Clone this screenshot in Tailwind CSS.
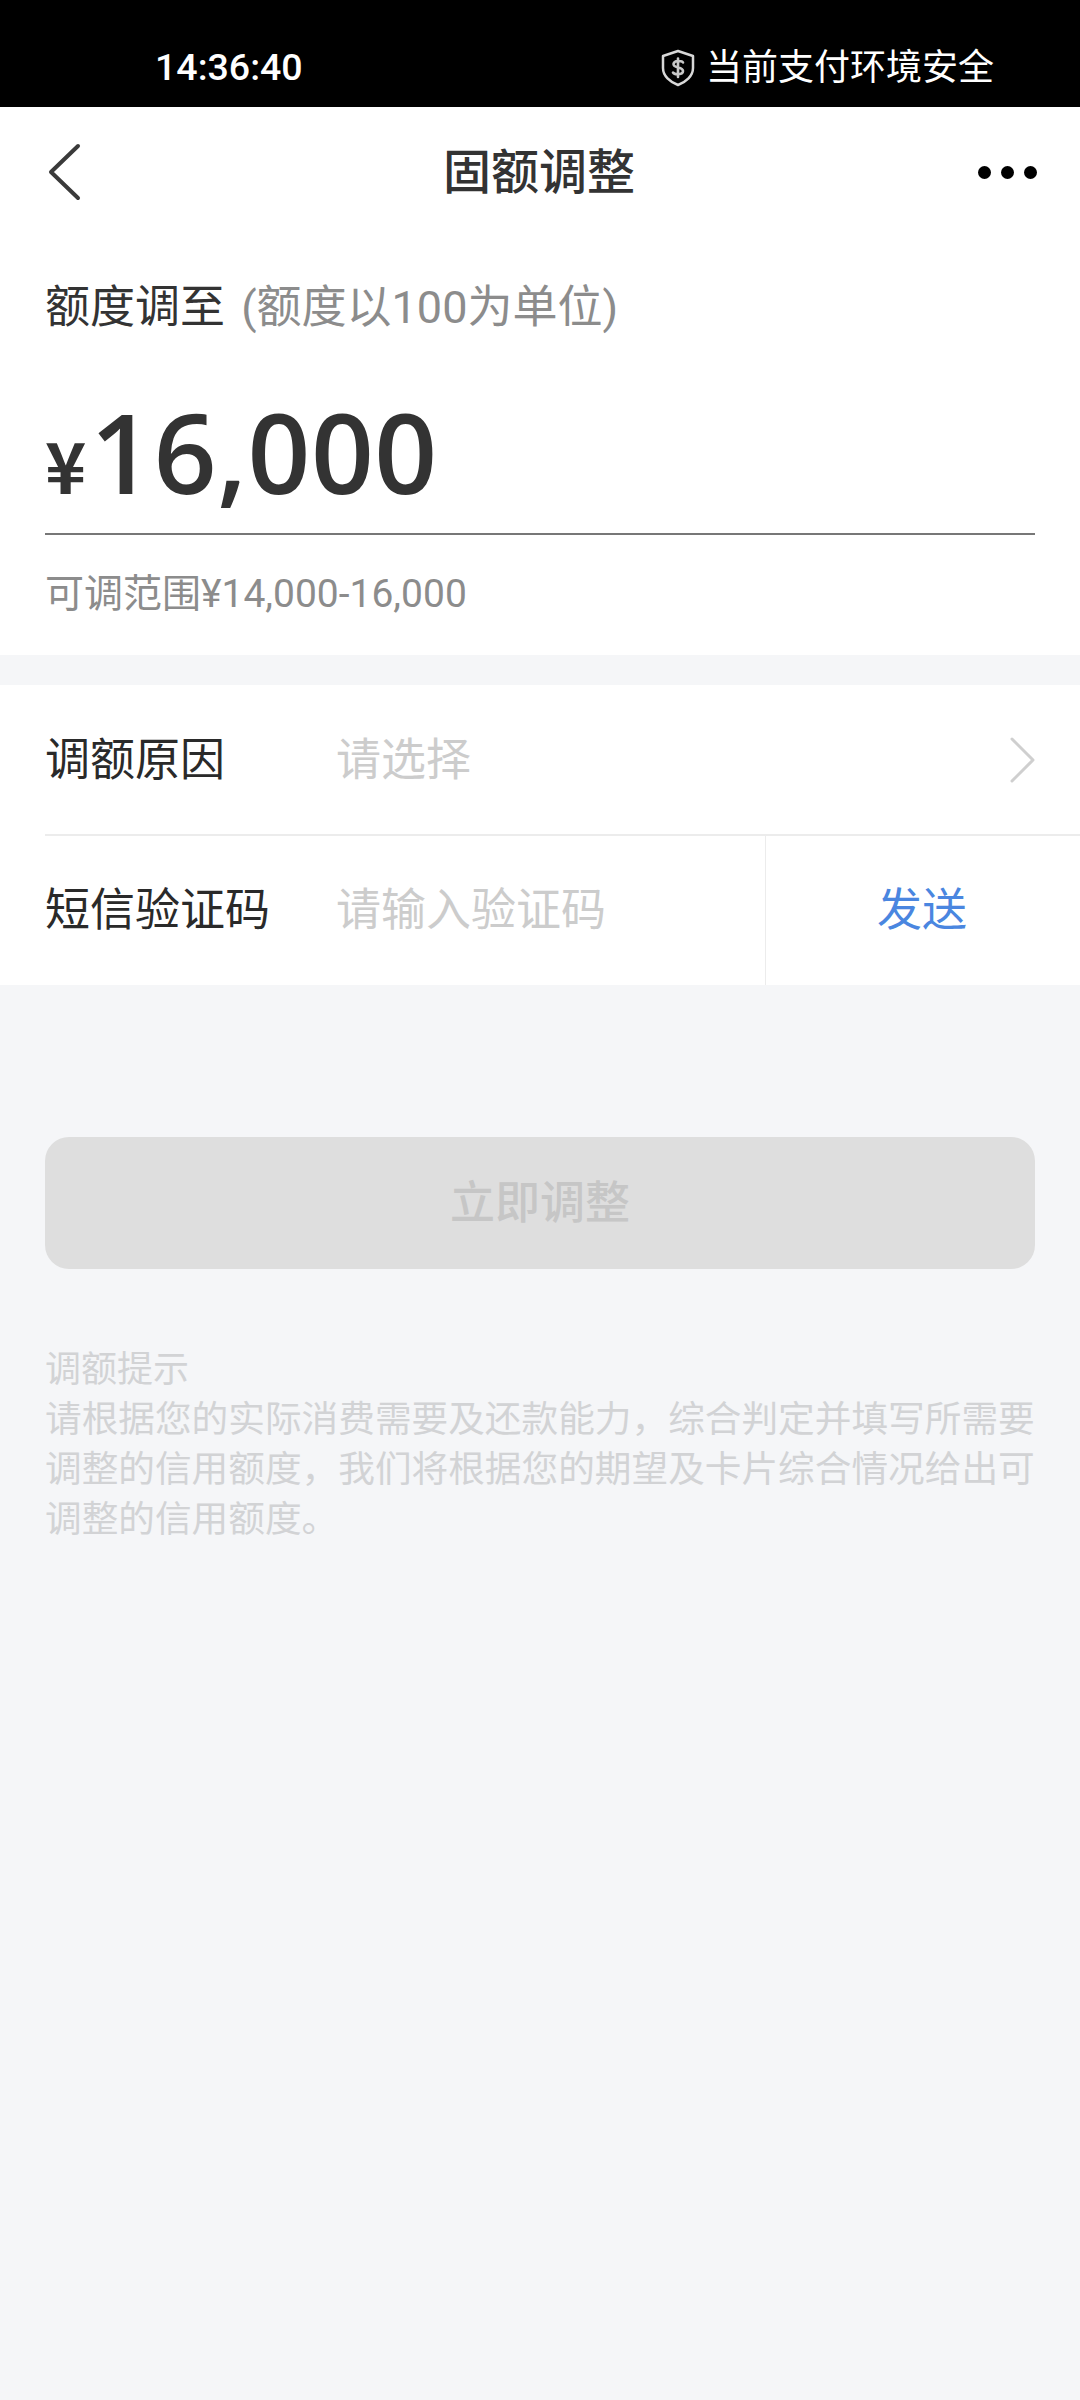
<!DOCTYPE html>
<html lang="zh-CN">
<head>
  <meta charset="UTF-8" />
  <meta name="viewport" content="width=device-width, initial-scale=1.0"/>
  <script src="https://cdn.jsdelivr.net/npm/@tailwindcss/browser@4"></script>
  <title>固额调整</title>
</head>
<body class="bg-[#f5f6f8] w-[1080px] h-[2400px] overflow-hidden font-['Roboto','Noto_Sans_CJK_SC',sans-serif]">

  <!-- status bar -->
  <div class="h-[107px] bg-black text-white flex items-center justify-between pt-[29px] pl-[155px] pr-[86px]">
    <span class="text-[37.5px] leading-none font-medium">14:36:40</span>
    <div class="flex items-center gap-[11px]">
      <svg width="34" height="40" viewBox="0 0 34 38" fill="none">
        <path d="M17 2 L32 7 V19 C32 27 25 33 17 36 C9 33 2 27 2 19 V7 Z" stroke="#d8d8d8" stroke-width="2.5" stroke-linejoin="round"/>
        <path d="M22 13.5 C21 11.5 13 11 12.5 15 C12 19.5 22 17.5 22 22 C22 26 13.5 26 12 23.5 M17 9.5 V28" stroke="#c8c8c8" stroke-width="2.6" stroke-linecap="round"/>
      </svg>
      <span class="text-[36px] leading-none">当前支付环境安全</span>
    </div>
  </div>

  <!-- nav + amount -->
  <div class="bg-white h-[548px] px-[45px]">
    <div class="h-[130px] flex items-center">
      <div class="w-[200px]">
        <svg width="36" height="58" viewBox="0 0 36 58" fill="none" class="ml-[1px]">
          <path d="M32 3 L5 29 L32 55" stroke="#3a3a3a" stroke-width="4" stroke-linecap="round" stroke-linejoin="round"/>
        </svg>
      </div>
      <h1 class="flex-1 text-center pt-[2px] pr-[4px] text-[48px] leading-none font-medium text-[#333]">固额调整</h1>
      <div class="w-[200px] flex justify-end gap-[10px] mr-[-2px]">
        <span class="w-[13px] h-[13px] rounded-full bg-black"></span>
        <span class="w-[13px] h-[13px] rounded-full bg-black"></span>
        <span class="w-[13px] h-[13px] rounded-full bg-black"></span>
      </div>
    </div>
    <p class="mt-[41px] text-[45px] leading-[60px] text-[#333]">额度调至 <span class="ml-[5px] text-[#8c8c8c]">(额度以100为单位)</span></p>
    <div class="h-[197px] border-b-2 border-[#777] flex items-baseline font-['Open_Sans',sans-serif] text-[#333] pt-[48px]">
      <span class="text-[70px] leading-[130px] font-['Noto_Sans_CJK_SC'] font-bold">¥</span>
      <span class="text-[110px] leading-[130px] ml-[4px] font-semibold tracking-[0.5px]">16,000</span>
    </div>
    <p class="mt-[31px] text-[39px] leading-[56px] text-[#8c8c8c]">可调范围¥14,000-16,000</p>
  </div>

  <!-- form -->
  <div class="mt-[30px] bg-white">
    <div class="h-[149px] flex items-center pl-[45px] pr-[44px] text-[45px] leading-none">
      <span class="w-[291px] text-[#2a2a2a] pt-[2px]">调额原因</span>
      <span class="flex-1 text-[#cccccc] pt-[2px]">请选择</span>
      <svg width="26" height="46" viewBox="0 0 26 46" fill="none">
        <path d="M2 2 L23 23 L2 44" stroke="#cfcfcf" stroke-width="3" stroke-linecap="round" stroke-linejoin="round"/>
      </svg>
    </div>
    <div class="ml-[45px] h-[151px] border-t-2 border-[#ececec] flex items-center text-[45px] leading-none">
      <span class="w-[291px] text-[#2a2a2a]">短信验证码</span>
      <span class="w-[429px] text-[#cccccc]">请输入验证码</span>
      <span class="flex-1 h-full border-l border-[#ececec] flex items-center justify-center pr-[2px] text-[#4a86e0]">发送</span>
    </div>
  </div>

  <!-- submit + hint -->
  <div class="px-[45px]">
    <div class="mt-[152px] h-[132px] rounded-[24px] bg-[#dedede] flex items-center justify-center text-[45px] leading-none font-medium text-[#c6c6c6]">立即调整</div>
    <p class="mt-[76px] text-[36.67px] leading-[50px] text-[#d2d3d5] whitespace-nowrap"><span class="text-[36px]">调额提示</span><br>请根据您的实际消费需要及还款能力，综合判定并填写所需要<br>调整的信用额度，我们将根据您的期望及卡片综合情况给出可<br>调整的信用额度。</p>
  </div>

</body>
</html>
